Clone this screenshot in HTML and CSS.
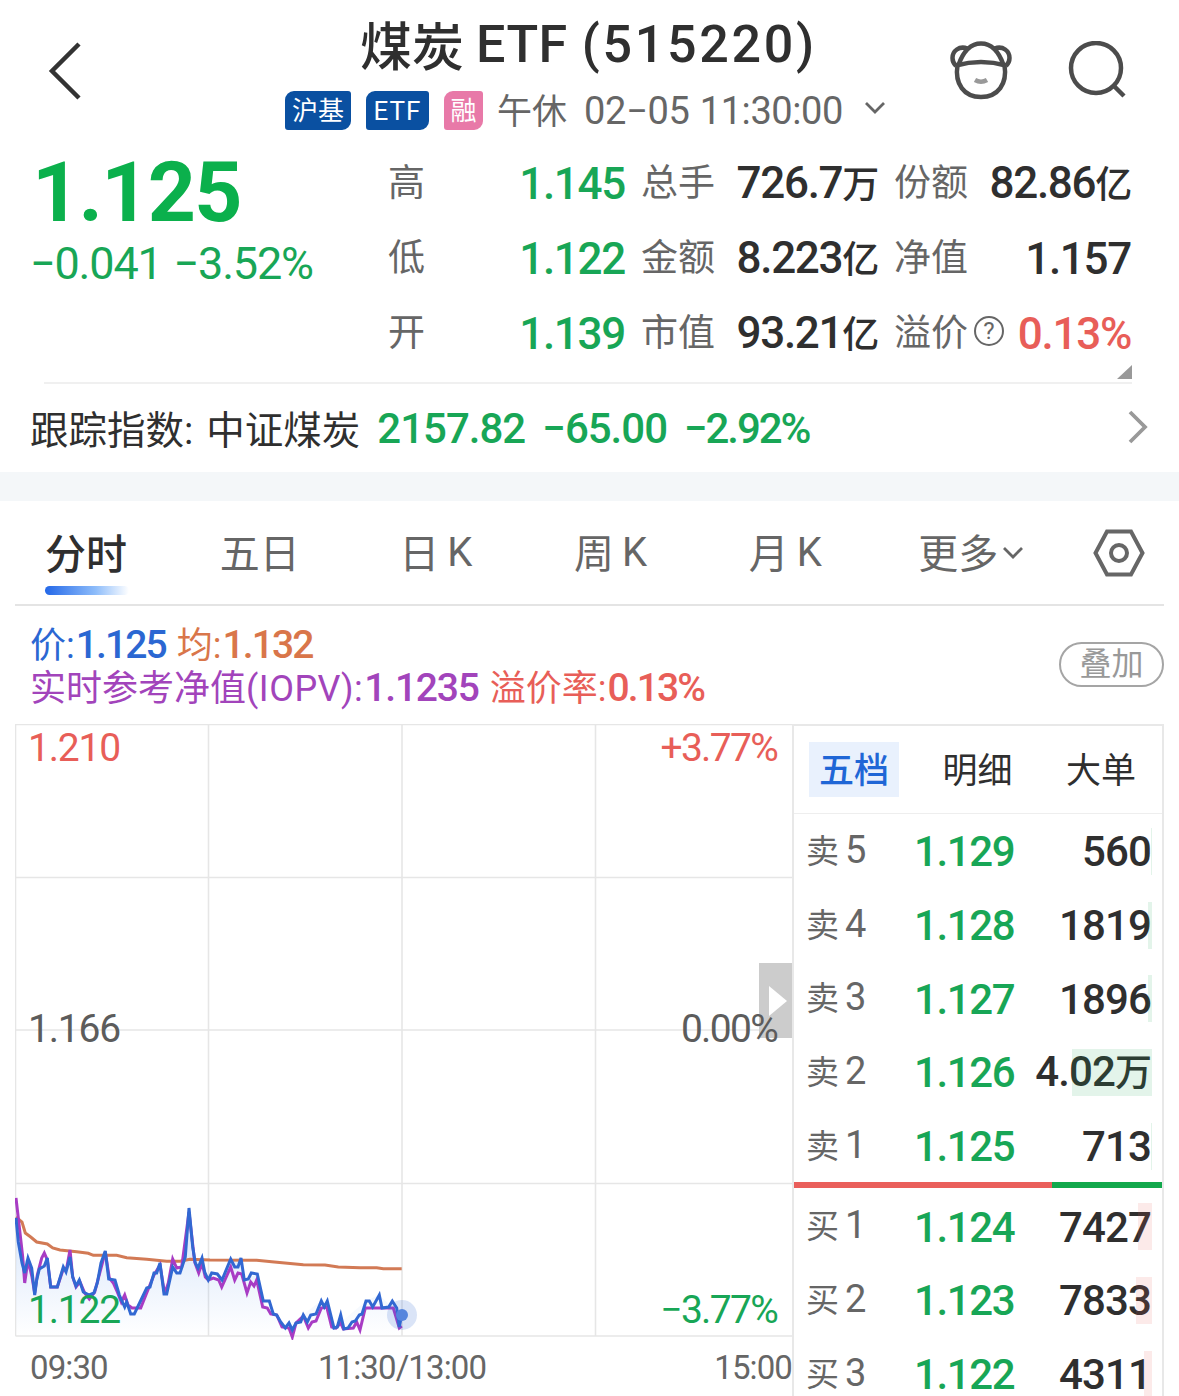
FILE: index.html
```html
<!DOCTYPE html>
<html lang="zh-CN">
<head>
  <meta charset="UTF-8">
  <meta name="viewport" content="width=device-width, initial-scale=1.0">
  <title>煤炭ETF (515220)</title>
  <link rel="stylesheet" href="styles.css">
</head>
<body>
  <header class="header">
    <svg class="back" width="36" height="60" viewBox="0 0 36 60"><path d="M32 3L5 30l27 27"/></svg>
    <div class="heading">
      <h1><span class="name">煤炭</span><span class="etf">ETF</span><span class="code">(515220)</span></h1>
      <div class="subline">
        <span class="tag">沪基</span>
        <span class="tag tag-etf">ETF</span>
        <span class="tag tag-pink">融</span>
        <span class="status">午休</span>
        <span class="date">02−05</span>
        <span class="time">11:30:00</span>
        <svg class="down" width="22" height="14" viewBox="0 0 22 14"><path d="M2 2l9 9 9-9"/></svg>
      </div>
    </div>
    <div class="tools">
      <svg width="64" height="64" viewBox="0 0 64 64">
        <path d="M8.500 24C5.500 43 15 56 32 56S58.500 43 55.500 24"/>
        <path d="M7 24.500Q32 17.500 57 24.500"/>
        <path d="M9.500 24C14 11 21 2.500 32 2.500S50 11 54.500 24"/>
        <path d="M18.500 7.500C10 4.500 3.500 10 3.500 17c0 3 1 5.500 3.500 8M45.500 7.500C54 4.500 60.500 10 60.500 17c0 3-1 5.500-3.500 8"/>
        <path class="smile" d="M26 39Q32 42.500 38 39"/>
      </svg>
      <svg width="64" height="64" viewBox="0 0 64 64"><circle cx="31" cy="27" r="25"/><path d="M48.500 44.500L59 55"/></svg>
    </div>
  </header>

  <section class="quote">
    <div class="price">
      <div class="last">1.125</div>
      <div class="change"><span>−0.041</span><span>−3.52%</span></div>
    </div>
    <div class="stats">
      <div class="stat"><span>高</span><b class="green">1.145</b></div>
      <div class="stat"><span>总手</span><b>726.7<i>万</i></b></div>
      <div class="stat"><span>份额</span><b>82.86<i>亿</i></b></div>
      <div class="stat"><span>低</span><b class="green">1.122</b></div>
      <div class="stat"><span>金额</span><b>8.223<i>亿</i></b></div>
      <div class="stat"><span>净值</span><b>1.157</b></div>
      <div class="stat"><span>开</span><b class="green">1.139</b></div>
      <div class="stat"><span>市值</span><b>93.21<i>亿</i></b></div>
      <div class="stat"><span>溢价</span><em class="help">?</em><b class="red">0.13%</b></div>
    </div>
    <svg class="corner" width="15" height="14" viewBox="0 0 15 14"><path d="M15 0v14H0z"/></svg>
  </section>

  <section class="index-row">
    <span class="index-name">跟踪指数:</span>
    <span class="index-name">中证煤炭</span>
    <span class="num">2157.82</span>
    <span class="num">−65.00</span>
    <span class="num pct">−2.92%</span>
    <svg class="go" width="20" height="34" viewBox="0 0 20 34"><path d="M2 2l15 15L2 32"/></svg>
  </section>

  <nav class="tabs">
    <span class="tab active">分时</span>
    <span class="tab">五日</span>
    <span class="tab k">日<u>K</u></span>
    <span class="tab k">周<u>K</u></span>
    <span class="tab k">月<u>K</u></span>
    <span class="tab">更多<svg class="down" width="22" height="14" viewBox="0 0 22 14"><path d="M2 2l9 9 9-9"/></svg></span>
    <svg class="gear" width="52" height="48" viewBox="0 0 52 48"><path d="M14 2.500h24L49.500 24 38 45.500H14L2.500 24z"/><circle cx="26" cy="24" r="8"/></svg>
  </nav>

  <div class="legend">
    <div class="legend-text">
      <p><span class="blue">价:<b>1.125</b></span><span class="orange">均:<b>1.132</b></span></p>
      <p><span class="purple">实时参考净值<s>(IOPV):</s><b>1.1235</b></span><span class="red">溢价率:<b>0.13%</b></span></p>
    </div>
    <button class="overlay-btn">叠加</button>
  </div>

  <main class="board">
    <div class="chart-col">
      <div class="chart">
        <svg class="plot" width="778" height="616" viewBox="15 724 778 616">
          <defs>
            <linearGradient id="fill" x1="0" y1="0" x2="0" y2="1">
              <stop offset="0" stop-color="#3f83e8" stop-opacity=".22"/>
              <stop offset="1" stop-color="#3f83e8" stop-opacity="0"/>
            </linearGradient>
          </defs>
          <path class="grid" d="M15.500 1336V724.500H792M15.500 1336H792M15 877.500H792M15 1030H792M15 1183.500H792M208.500 724V1336M402 724V1336M595.500 724V1336"/>
          <path class="handle" d="M759 963h33v75h-33z"/>
          <path class="handle-arrow" d="M769 986v30l18-15z"/>
          <path fill="url(#fill)" d="M16 1218L22 1263 28 1258 34.700 1295 39.300 1269 47.300 1258 50.700 1287 57.300 1287 70 1257 76 1286 89.300 1295 97.300 1283 105.300 1251 108.700 1279 115 1280 132 1314 150 1287 160 1263 165 1294 172.700 1267 180 1273 189 1208 195 1263 202 1258 208 1280 222 1280 230.700 1259 241 1258 244 1280 257 1274 263 1301 285 1328 321 1301 334 1328 366 1301 379 1295 401 1315V1336H16z"/>
          <polyline class="line avg" points="16,1217 22,1222 25.300,1233 30.700,1237 36.700,1242 47.300,1244 52.700,1248 60,1250 76.700,1251.700 88.300,1253.300 93.300,1255.300 116.700,1255.300 126.700,1257.700 146.700,1259.300 166.700,1261.300 180,1261.300 190,1259.300 210,1260 256.700,1260.300 271.700,1261.700 303.300,1264.700 325,1265 338.300,1267 360,1267.700 376.700,1267.700 383.300,1268.700 401.700,1268.700"/>
          <polyline class="line iopv" points="16,1198 20,1233 22.700,1257 24.700,1283 28,1260 32,1277 34.700,1293 37.300,1275 41.700,1258 44.300,1253 47.300,1260 50.700,1287 57.300,1287 63.300,1269 66.700,1268 70,1250 72.700,1277 76,1287 80,1282 84.700,1293 89.300,1299 94.700,1292 105.300,1252 109.300,1278 113.300,1283 117.300,1292 121.300,1302 124.700,1295 128,1305 132,1308 140.700,1308 146.700,1293 154,1275 160,1265 164.700,1294 168.300,1283 172.700,1259 176.700,1268 181.700,1267 189,1212 194.700,1262 198.700,1273 202,1263 205.300,1277 208.300,1280 213.300,1278 218.700,1280 221.700,1287 230.700,1267 234.700,1280 238,1273 241.700,1274 247,1293 250.700,1282 254,1286 256.700,1280 262.700,1307 267.300,1308 270.700,1314 276.700,1315 282,1327 289,1328 292.300,1337 296,1323 303.300,1316 308.300,1328 312,1322 316,1321 321.300,1308 326.700,1307 331.700,1327 336,1328 340.700,1323 343.300,1329 353.300,1328 356.700,1322 360,1330 365.300,1308 393.300,1308 399.300,1328 401.700,1326"/>
          <polyline class="line now" points="16,1218 18.300,1242 22,1263 24.700,1273 28,1258 31.700,1268 34.700,1295 36.700,1280 39.300,1269 44.300,1266 47.300,1258 50.700,1287 57.300,1287 63.300,1267 66,1272 70,1257 72.700,1277 76,1286 79.300,1280 83.300,1292 89.300,1295 94,1293 97.300,1283 101,1263 105.300,1251 108.700,1279 115,1280 119.300,1295 124.700,1307 126.700,1302 130.700,1314 134.300,1314 146.700,1288 150,1287 154,1273 156.700,1273 160,1263 164,1294 166.700,1294 172.700,1267 176.700,1273 180,1273 185.300,1257 189,1208 192.700,1247 195.300,1263 198,1268 202,1258 204.700,1272 208.300,1280 211.700,1273 217.300,1274 222,1280 230.700,1259 234.700,1267 238,1267 241,1258 244.300,1280 248.300,1279 251.300,1273 257.300,1274 263.300,1301 269.300,1301 273.300,1314 276.700,1315 280.700,1322 285.300,1328 289,1323 292.300,1330 296,1323 300.700,1322 303.300,1315 307.300,1322 310.700,1315 316,1314 321.300,1301 324.300,1307 327.300,1301 334,1328 337.300,1327 340.700,1315 344,1329 348,1328 352,1322 355.300,1321 359.300,1315 362,1314 366,1301 369.300,1301 372.700,1307 379.300,1295 382,1308 388.700,1307 392.300,1301 396.700,1308 399.300,1327 401.700,1315"/>
          <circle class="halo" cx="402" cy="1315" r="15"/>
          <circle class="dot" cx="402" cy="1315" r="6"/>
        </svg>
        <div class="scale">
          <div class="red"><span>1.210</span><span class="pct">+3.77%</span></div>
          <div class="grey"><span>1.166</span><span class="pct">0.00%</span></div>
          <div class="green"><span>1.122</span><span class="pct">−3.77%</span></div>
        </div>
      </div>
      <div class="times"><span>09:30</span><span class="noon">11:30/13:00</span><span>15:00</span></div>
    </div>

    <aside class="book">
      <div class="book-tabs"><span class="on">五档</span><span>明细</span><span>大单</span></div>
      <div class="level"><span>卖<u>5</u></span><b>1.129</b><strong>560</strong><div class="bar sell" style="width: 1px"></div></div>
      <div class="level"><span>卖<u>4</u></span><b>1.128</b><strong>1819</strong><div class="bar sell" style="width: 4px"></div></div>
      <div class="level"><span>卖<u>3</u></span><b>1.127</b><strong>1896</strong><div class="bar sell" style="width: 4px"></div></div>
      <div class="level"><span>卖<u>2</u></span><b>1.126</b><strong>4.02<i>万</i></strong><div class="bar sell" style="width: 80px"></div></div>
      <div class="level"><span>卖<u>1</u></span><b>1.125</b><strong>713</strong><div class="bar sell" style="width: 1px"></div></div>
      <div class="ratio"><div style="width: 70%"></div></div>
      <div class="level"><span>买<u>1</u></span><b>1.124</b><strong>7427</strong><div class="bar buy" style="width: 14px"></div></div>
      <div class="level"><span>买<u>2</u></span><b>1.123</b><strong>7833</strong><div class="bar buy" style="width: 16px"></div></div>
      <div class="level"><span>买<u>3</u></span><b>1.122</b><strong>4311</strong><div class="bar buy" style="width: 8px"></div></div>
    </aside>
  </main>
</body>
</html>
```
FILE: styles.css
```css
* {
  box-sizing: border-box;
}

body {
  margin: 0;
  width: 1179px;
  height: 1396px;
  overflow: hidden;
  background: #fff;
  color: #2f2f2f;
  font-family: Roboto, "Noto Sans CJK SC", sans-serif;
}

h1, p {
  margin: 0;
}

i, em, u, s {
  font-style: normal;
  text-decoration: none;
}

svg {
  display: block;
  flex: none;
  fill: none;
}

.green { color: #18a656; }
.red { color: #e85e58; }
.blue { color: #2b67d2; }
.orange { color: #d9764a; }
.purple { color: #a244bb; }
.grey { color: #5c5c5c; }

/* header */
.header {
  display: flex;
  height: 146px;
}

.back {
  margin: 41px 0 0 47px;
  stroke: #333;
  stroke-width: 4.5;
}

.heading {
  margin-left: 202px;
  width: 606px;
}

h1 {
  display: flex;
  height: 90px;
  padding-left: 75px;
  font-size: 52px;
  font-weight: 500;
  line-height: 90px;
  white-space: nowrap;
}

.name {
  line-height: 98px;
}

.etf {
  margin-left: 12px;
  letter-spacing: 0.5px;
}

.code {
  margin-left: 14px;
  letter-spacing: 2.7px;
}

.subline {
  display: flex;
  align-items: center;
  height: 40px;
  color: #666;
  font-size: 38px;
  white-space: nowrap;
}

.tag {
  flex: none;
  width: 66px;
  height: 39px;
  margin-right: 15px;
  border-radius: 9px 3px 9px 3px;
  background: #0a50a1;
  color: #fff;
  font-size: 26px;
  line-height: 41px;
  text-align: center;
}

.tag-etf {
  width: 63px;
  letter-spacing: 1px;
}

.tag-pink {
  width: 39px;
  background: #e879a8;
}

.status {
  margin: -4px 0 0 -1px;
  font-size: 35px;
}

.date {
  margin: 2px 0 0 17px;
  letter-spacing: -0.3px;
}

.time {
  margin: 2px 0 0 10px;
  letter-spacing: -0.4px;
}

.down {
  stroke: #666;
  stroke-width: 2.8;
}

.subline .down {
  margin: -4px 0 0 21px;
}

.tools {
  display: flex;
  gap: 52px;
  margin: 41px 0 0 58px;
  stroke: #4c4c4c;
  stroke-width: 4.5;
}

.smile {
  stroke: #999;
}

/* quote */
.quote {
  display: flex;
  position: relative;
  height: 237px;
  margin: 0 47px 0 30px;
}

.quote::after {
  content: "";
  position: absolute;
  left: 14px;
  right: 0;
  bottom: -1px;
  height: 2px;
  background: #f0f0f0;
}

.price {
  width: 358px;
}

.last {
  height: 92px;
  padding-left: 2px;
  color: #0bb04c;
  font-size: 84px;
  font-weight: 700;
  line-height: 94px;
  letter-spacing: -1.7px;
}

.change {
  display: flex;
  gap: 12px;
  color: #18a656;
  font-size: 45px;
  line-height: 52px;
  letter-spacing: -1.2px;
}

.stats {
  display: grid;
  grid-template-columns: repeat(3, 238px);
  grid-auto-rows: 75px;
  column-gap: 15px;
}

.stat {
  display: flex;
  align-items: center;
  justify-content: space-between;
  color: #666;
  font-size: 37px;
  line-height: 75px;
}

.stat b {
  padding: 1px 1px 0 0;
  color: #2f2f2f;
  font-size: 44px;
  font-weight: 500;
  letter-spacing: -1.3px;
}

.stat b.green { color: #18a656; }
.stat b.red { color: #e85e58; }

.stat i, .level i {
  font-size: 37px;
}

.help {
  width: 30px;
  height: 30px;
  margin: -5px auto 0 6px;
  border: 2px solid #666;
  border-radius: 50%;
  font-size: 24px;
  line-height: 27px;
  text-align: center;
}

.corner {
  position: absolute;
  right: 0;
  bottom: 4px;
  fill: #999;
}

/* tracked index */
.index-row {
  display: flex;
  align-items: center;
  height: 118px;
  padding: 4px 31px 0 30px;
  border-bottom: 29px solid #f4f7f9;
  white-space: nowrap;
}

.index-name {
  margin: 0 13px 6px 0;
  font-size: 38.5px;
}

.index-row .num {
  margin: 0 13px 2px 4px;
  color: #18a656;
  font-size: 42px;
  font-weight: 500;
  letter-spacing: -1px;
}

.index-row .pct {
  letter-spacing: -2.1px;
}

.go {
  margin: 0 0 5px auto;
  stroke: #999;
  stroke-width: 3.8;
}

/* period tabs */
.tabs {
  display: flex;
  align-items: center;
  height: 105px;
  margin: 0 15px;
  padding: 0 19px 4px 30px;
  border-bottom: 2px solid #e4e4e4;
  color: #666;
  font-size: 40px;
}

.tab {
  display: flex;
  position: relative;
  align-items: center;
  width: 176px;
  white-space: nowrap;
}

.k {
  padding-left: 5px;
}

.tab u {
  margin: 4px 0 0 8px;
}

.tab.active {
  color: #2f2f2f;
  font-size: 41px;
  font-weight: 500;
}

.tab.active::after {
  content: "";
  position: absolute;
  left: 0;
  bottom: -14px;
  width: 84px;
  height: 9px;
  border-radius: 5px;
  background: linear-gradient(90deg, #2468e8, #8dbcfa 60%, #fff);
}

.tab .down {
  margin: 4px 0 0 4px;
}

.gear {
  margin: 4px 0 0 auto;
  stroke: #666;
  stroke-width: 4;
}

/* legend above the chart */
.legend {
  display: flex;
  justify-content: space-between;
  height: 118px;
  padding: 18px 15px 0 30px;
}

.legend p {
  display: flex;
  gap: 11px;
  height: 43px;
  font-size: 36px;
  line-height: 43px;
  white-space: nowrap;
}

.legend b {
  margin-left: 1px;
  font-size: 39px;
  font-weight: 500;
  letter-spacing: -1.9px;
}

.legend s {
  letter-spacing: 0.5px;
}

.legend .purple b {
  letter-spacing: -1.2px;
}

.overlay-btn {
  width: 105px;
  height: 45px;
  margin-top: 18px;
  padding: 0 0 6px;
  border: 2px solid #a5a5a5;
  border-radius: 23px;
  background: #fff;
  color: #999;
  font: 32px/35px "Noto Sans CJK SC", sans-serif;
}

/* chart */
.board {
  display: flex;
  height: 672px;
  margin: 0 15px;
}

.chart-col {
  width: 777px;
}

.chart {
  position: relative;
  height: 612px;
}

.plot {
  position: absolute;
  top: 0;
  left: 0;
}

.grid {
  stroke: #e6e6e6;
  stroke-width: 1.6;
}

.handle { fill: #ccc; }
.handle-arrow { fill: #fff; }

.line { stroke-width: 3; }
.avg { stroke: #d27a55; }
.iopv { stroke: #a83cc4; }
.now { stroke: #3268d2; }
.halo { fill: #3268d2; fill-opacity: .18; }
.dot { fill: #5585dd; }

.scale {
  display: flex;
  position: relative;
  flex-direction: column;
  justify-content: space-between;
  height: 612px;
  padding: 2px 14px 4px 13px;
  font-size: 39px;
  line-height: 44px;
  letter-spacing: -1.2px;
}

.scale div {
  display: flex;
  justify-content: space-between;
}

.scale .pct {
  padding-right: 1px;
  letter-spacing: -1.7px;
}

.times {
  display: flex;
  justify-content: space-between;
  padding: 12px 0 0 15px;
  color: #666;
  font-size: 33px;
  line-height: 40px;
  letter-spacing: -0.9px;
}

.noon {
  margin-right: 18px;
}

/* order book */
.book {
  width: 372px;
  border: 2px solid #e8e8e8;
  border-bottom: 0;
}

.book-tabs {
  display: flex;
  align-items: center;
  justify-content: space-between;
  height: 88px;
  padding: 0 16px 0 15px;
  border-bottom: 1px solid #eee;
  font-size: 35px;
}

.book-tabs span {
  height: 55px;
  padding: 0 10px;
  line-height: 60px;
}

.book-tabs .on {
  background: #e9f1fd;
  color: #1f66d6;
  font-weight: 500;
}

.level {
  display: flex;
  position: relative;
  align-items: center;
  height: 73.7px;
  padding: 3px 11px 0 12px;
  line-height: 42px;
}

.level span {
  width: 108px;
  margin-top: -3px;
  color: #666;
  font-size: 33px;
}

.level u {
  margin-left: 6px;
  font-size: 38px;
}

.level b {
  color: #18a656;
  font-size: 42px;
  font-weight: 500;
  letter-spacing: -1.4px;
}

.level strong {
  margin-left: auto;
  font-size: 42px;
  font-weight: 500;
  letter-spacing: -0.9px;
}

.bar {
  position: absolute;
  top: 14px;
  right: 10px;
  height: 47px;
}

.sell { background: rgba(24, 166, 86, .12); }
.buy { background: rgba(232, 94, 88, .13); }

.ratio {
  height: 6px;
  margin-bottom: 1px;
  background: #12a84c;
}

.ratio div {
  height: 6px;
  background: #ea5f5b;
}
```
